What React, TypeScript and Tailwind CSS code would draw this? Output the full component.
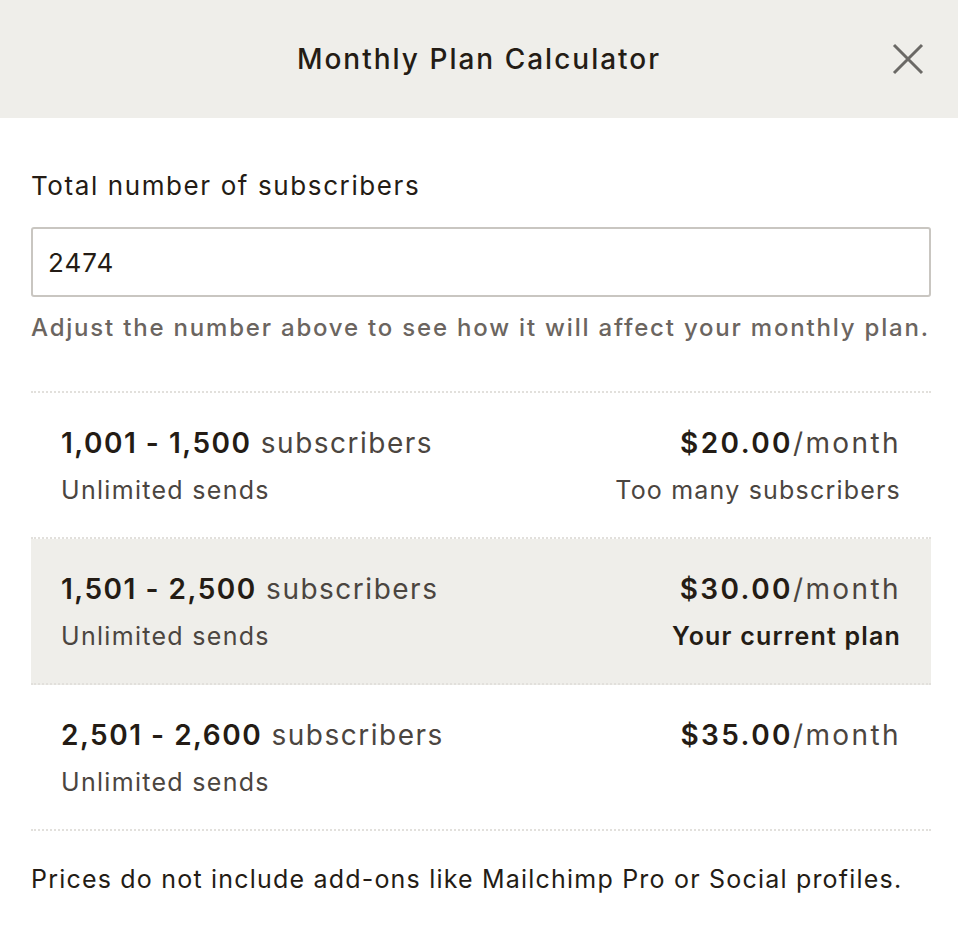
import React, { useState } from 'react';

const plans = [
  { range: '1,001 - 1,500', price: '$20.00', note: 'Too many subscribers', current: false },
  { range: '1,501 - 2,500', price: '$30.00', note: 'Your current plan', current: true },
  { range: '2,501 - 2,600', price: '$35.00', note: '', current: false },
];

const App: React.FC = () => {
  const [count, setCount] = useState('2474');

  return (
    <div className="min-h-screen w-full bg-white text-[#241c15]" style={{ fontFamily: 'Inter, "Noto Sans", sans-serif' }}>
      {/* Header */}
      <div className="relative flex h-[118px] items-center justify-center bg-[#efeeea]">
        <h1 className="text-[28px] font-medium tracking-[2px]">Monthly Plan Calculator</h1>
        <button className="absolute right-[34px] top-[43px] text-[#6b6966]" aria-label="Close">
          <svg width="32" height="32" viewBox="0 0 32 32" fill="none" stroke="currentColor" strokeWidth="3" strokeLinecap="butt">
            <path d="M2 2 L30 30 M30 2 L2 30" />
          </svg>
        </button>
      </div>

      <div className="pl-[31px] pr-[27px] pt-[50px]">
        <label className="block text-[26px] leading-[36px] tracking-[1.6px] text-[#241c15]">Total number of subscribers</label>
        <input
          value={count}
          onChange={(e) => setCount(e.target.value)}
          className="mt-[23px] block h-[70px] w-full rounded-[3px] border-2 border-[#c9c6c1] px-[15px] text-[26px] tracking-[1px] text-[#241c15] outline-none"
          style={{ fontFamily: 'Inter, "Noto Sans", sans-serif' }}
        />
        <p className="mt-[14px] whitespace-nowrap text-[24px] leading-[34px] font-medium tracking-[1.8px] text-[#6b6560]">
          Adjust the number above to see how it will affect your monthly plan.
        </p>

        {/* Plans */}
        <div className="mt-[46px] border-t-2 border-dotted border-[#e2e0dc]">
          {plans.map((p) => (
            <div
              key={p.range}
              className={`flex h-[146px] justify-between border-b-2 border-dotted border-[#e2e0dc] px-[30px] pt-[30px] ${p.current ? 'bg-[#efeeea]' : ''}`}
            >
              <div>
                <div className="text-[28px] leading-[40px] tracking-[1.5px] text-[#4b4540]">
                  <span className="font-semibold text-[#241c15]">{p.range}</span> subscribers
                </div>
                <div className="mt-[9px] text-[25px] leading-[36px] tracking-[1.3px] text-[#4b4540]">Unlimited sends</div>
              </div>
              <div className="text-right">
                <div className="text-[28px] leading-[40px] tracking-[2.4px] text-[#4b4540]">
                  <span className="font-semibold text-[#241c15]">{p.price}</span>/month
                </div>
                {p.note && (
                  <div className={`mt-[9px] text-[25px] leading-[36px] tracking-[1.2px] ${p.current ? 'font-semibold text-[#241c15]' : 'text-[#4b4540]'}`}>
                    {p.note}
                  </div>
                )}
              </div>
            </div>
          ))}
        </div>

        <p className="mt-[30px] text-[25px] leading-[36px] tracking-[1.2px] text-[#241c15]">
          Prices do not include add-ons like Mailchimp Pro or Social profiles.
        </p>
      </div>
    </div>
  );
};

export default App;
